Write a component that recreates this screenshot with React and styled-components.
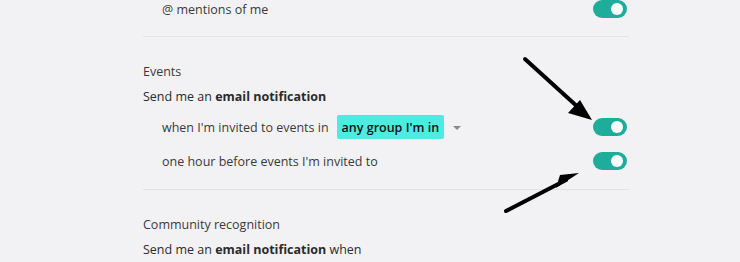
import React from 'react';
import styled, { createGlobalStyle } from 'styled-components';

const GlobalStyle = createGlobalStyle`
  html, body {
    margin: 0;
    padding: 0;
    background: #f2f2f4;
    overflow: hidden;
  }
  body {
    font-family: "Open Sans", "Noto Sans", Arial, sans-serif;
    font-size: 12.5px;
    color: #333;
  }
`;

const Page = styled.div`
  position: relative;
  width: 740px;
  height: 262px;
  overflow: hidden;
`;

const Column = styled.div`
  width: 486px;
  margin-left: 143px;
  margin-top: -8px;
`;

const Section = styled.section`
  padding: ${(p) => (p.$first ? '0 0 10px' : '25px 0 11px')};
  border-bottom: ${(p) => (p.$last ? 'none' : '1px solid #e2e2e6')};
`;

const Heading = styled.div`
  line-height: 20px;
  margin-bottom: 5px;
  color: #3a3a3a;
`;

const Subtitle = styled.div`
  line-height: 20px;
  margin-bottom: 3px;
  color: #2b2b2b;

  b {
    font-weight: 700;
  }
`;

const Row = styled.div`
  display: flex;
  align-items: center;
  height: 34px;
  padding-left: 19px;
  padding-right: 2px;
`;

const Label = styled.span`
  flex: 1 1 auto;
  display: flex;
  align-items: center;
  color: #3a3a3a;
`;

const Badge = styled.span`
  display: inline-flex;
  align-items: center;
  height: 24px;
  margin-left: 8px;
  padding: 0 5px;
  border-radius: 2px;
  background: #4debe0;
  color: #111;
  font-weight: 600;
`;

const Caret = styled.span`
  width: 0;
  height: 0;
  margin-left: 9px;
  margin-top: 2px;
  border-left: 4px solid transparent;
  border-right: 4px solid transparent;
  border-top: 4px solid #8a8a8e;
`;

const Toggle = styled.span`
  position: relative;
  flex: 0 0 auto;
  width: 34px;
  height: 18px;
  border-radius: 9px;
  background: #1fad9b;

  &::after {
    content: '';
    position: absolute;
    top: 3px;
    right: 4px;
    width: 12px;
    height: 12px;
    border-radius: 50%;
    background: #fff;
  }
`;

const Arrows = styled.svg`
  position: absolute;
  left: 0;
  top: 0;
  pointer-events: none;
`;

export default function App() {
  return (
    <Page>
      <GlobalStyle />
      <Column>
        <Section $first>
          <Row>
            <Label>@ mentions of me</Label>
            <Toggle />
          </Row>
        </Section>
        <Section>
          <Heading>Events</Heading>
          <Subtitle>
            Send me an <b>email notification</b>
          </Subtitle>
          <Row>
            <Label>
              when I'm invited to events in
              <Badge>any group I'm in</Badge>
              <Caret />
            </Label>
            <Toggle />
          </Row>
          <Row>
            <Label>one hour before events I'm invited to</Label>
            <Toggle />
          </Row>
        </Section>
        <Section $last>
          <Heading>Community recognition</Heading>
          <Subtitle>
            Send me an <b>email notification</b> when
          </Subtitle>
        </Section>
      </Column>
      <Arrows width="740" height="262" viewBox="0 0 740 262">
        <g stroke="#000" strokeWidth="4" strokeLinecap="round" fill="none">
          <line x1="525" y1="59" x2="580" y2="109" />
          <line x1="506" y1="211" x2="566" y2="180" />
        </g>
        <g fill="#000">
          <polygon points="592,120 568,113 580,100" />
          <polygon points="579,173 556,188 560,175" />
        </g>
      </Arrows>
    </Page>
  );
}
